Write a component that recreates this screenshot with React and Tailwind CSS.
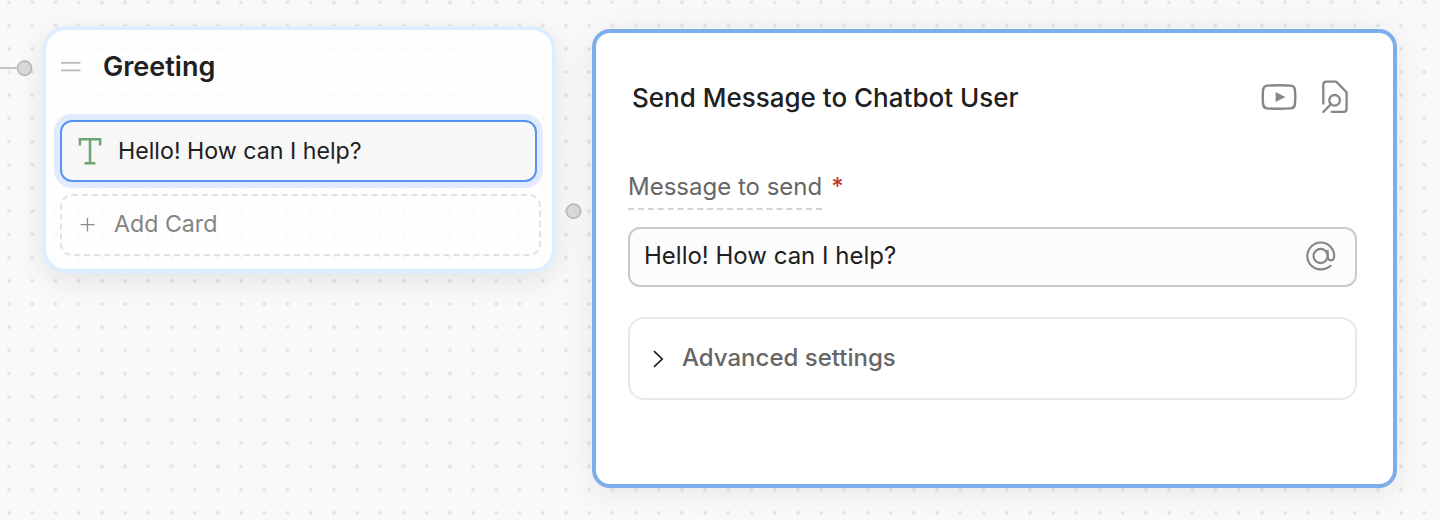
function DotGrid() {
  return (
    <svg className="absolute inset-0 h-full w-full" aria-hidden="true">
      <defs>
        <pattern id="dots" x="-2.45" y="-9.2" width="23.2" height="23.2" patternUnits="userSpaceOnUse">
          <circle cx="11.6" cy="11.6" r="2" fill="#e5e5e5" />
        </pattern>
      </defs>
      <rect width="100%" height="100%" fill="url(#dots)" />
    </svg>
  );
}

function Handle() {
  return (
    <svg className="block h-4 w-4 shrink-0" viewBox="0 0 16 16" aria-hidden="true">
      <circle cx="7.6" cy="8.2" r="7.1" fill="#d9d9d9" stroke="#b6b6b6" strokeWidth="1.5" />
    </svg>
  );
}

function GripIcon() {
  return (
    <svg className="h-5 w-5" viewBox="0 0 20 20" stroke="#b9b9b9" strokeWidth="1.7" aria-hidden="true">
      <path d="M0 5.8H19.4M0 13.4H19.4" />
    </svg>
  );
}

function TextIcon() {
  return (
    <svg className="h-7 w-6" viewBox="0 0 24 28" fill="none" stroke="#6fa372" strokeWidth="2.5" aria-hidden="true">
      <path d="M1.9 8.6V2.2H22.1V8.6M12 2.2V26.2M6.6 26.2H17.4" />
    </svg>
  );
}

function VideoIcon() {
  return (
    <svg className="h-[26px] w-9" viewBox="0 0 36 26" fill="none" aria-hidden="true">
      <path
        d="M6.2 1.6Q18 .8 29.8 1.6Q33.4 1.9 33.9 5.5Q34.6 13 33.9 20.5Q33.4 24.1 29.8 24.4Q18 25.2 6.2 24.4Q2.6 24.1 2.1 20.5Q1.4 13 2.1 5.5Q2.6 1.9 6.2 1.6Z"
        stroke="#868686"
        strokeWidth="2.4"
      />
      <path d="M14.6 8L24.4 13L14.6 18Z" fill="#868686" />
    </svg>
  );
}

function FileSearchIcon() {
  return (
    <svg className="h-[34px] w-7" viewBox="0 0 28 34" fill="none" stroke="#868686" strokeWidth="2.3" strokeLinecap="round" strokeLinejoin="round" aria-hidden="true">
      <path d="M2.3 23.7V4.6Q2.3 1.6 5.3 1.6H15.2L25.6 12.3V28.7Q25.6 31.8 22.6 31.8H10.7" />
      <circle cx="13.6" cy="20.3" r="5.3" />
      <path d="M9.8 24.2L2.3 32" />
    </svg>
  );
}

function AtIcon() {
  return (
    <svg className="h-[30px] w-[30px]" viewBox="0 0 30 30" fill="none" stroke="#858585" strokeWidth="2.1" strokeLinecap="round" aria-hidden="true">
      <circle cx="14.6" cy="15" r="7.1" />
      <path d="M21.7 9.8V15.8Q21.8 19.4 24.9 19.4Q28.2 19.3 28.2 15C28.2 7.4 22.2 1.5 14.8 1.5S1.3 7.5 1.3 15S7.3 28.4 14.7 28.4Q20.4 28.4 24.4 24.8" />
    </svg>
  );
}

function GreetingNode() {
  return (
    <section className="flex h-[247px] w-[514px] shrink-0 flex-col rounded-[24px] border-4 border-[#dceeff] bg-white/75 shadow-[0_8px_28px_rgba(0,0,0,0.09)]">
      <header className="flex h-[74px] items-center pl-[15px]">
        <GripIcon />
        <h2 className="ml-[22px] text-[27px] font-semibold leading-8 text-[#202020]">Greeting</h2>
      </header>
      <div className="mt-4 ml-[14px] flex h-[62px] w-[477px] items-center rounded-[12px] border-2 border-[#5793f3] bg-[#f4f4f4]/75 pl-[16px] shadow-[0_0_0_6px_#e2ebfd]">
        <TextIcon />
        <span className="ml-[16px] text-[23.2px] text-[#202020]">Hello! How can I help?</span>
      </div>
      <button className="mt-3 ml-[14px] flex h-[62px] w-[481px] items-center rounded-[12px] border-2 border-dashed border-[#e2e2e2] pl-[17px]">
        <svg className="h-4 w-4" viewBox="0 0 16 16" stroke="#8b8b8b" strokeWidth="1.3" aria-hidden="true">
          <path d="M1.6 7.6H15.4M8.5 .8V14.6" />
        </svg>
        <span className="ml-[19px] -mt-[2px] text-[23.2px] text-[#838383]">Add Card</span>
      </button>
    </section>
  );
}

function MessagePanel() {
  return (
    <section className="flex h-[459px] w-[805px] shrink-0 flex-col rounded-[18px] border-4 border-[#7daeec] bg-white px-8 shadow-[0_4px_32px_rgba(0,0,0,0.08)]">
      <header className="mt-[46px] flex h-9 items-center pl-1">
        <h1 className="grow text-[26px] font-medium text-[#202020]">Send Message to Chatbot User</h1>
        <div className="mr-3 flex items-center gap-6">
          <VideoIcon />
          <FileSearchIcon />
        </div>
      </header>
      <div className="mt-[51px] flex h-[44px] items-start gap-[9px] text-[24px]">
        <label className="h-[44px] border-b-2 border-dashed border-[#d4d4d4] leading-[42px] text-[#666666]">Message to send</label>
        <span className="font-medium leading-[42px] text-[#c0392f]">*</span>
      </div>
      <div className="mt-[17px] flex h-[60px] w-[729px] items-center rounded-[12px] border-2 border-[#cacaca] bg-[#fcfcfc] pr-[19px] pb-[2px] pl-[14px]">
        <span className="grow text-[24px] text-[#202020]">Hello! How can I help?</span>
        <AtIcon />
      </div>
      <div className="mt-[30px] flex h-[83px] w-[729px] items-center rounded-[16px] border-2 border-[#e8e8e8] pb-[2px] pl-[22px]">
        <svg className="mt-[2px] h-[18px] w-3" viewBox="0 0 12 18" fill="none" stroke="#202020" strokeWidth="1.7" aria-hidden="true">
          <path d="M2 1.2L10.2 9L2 16.8" />
        </svg>
        <span className="ml-[18px] text-[24px] font-medium text-[#666666]">Advanced settings</span>
      </div>
    </section>
  );
}

export default function App() {
  return (
    <main className="relative h-[520px] w-[1440px] overflow-hidden bg-[#f9f9f9] font-[Inter,sans-serif]">
      <DotGrid />
      <div className="relative flex items-start">
        <div className="flex items-center pt-[60px]">
          <div className="h-[2px] w-[17px] bg-[#c2c2c2]" />
          <Handle />
        </div>
        <div className="pt-[26px] pl-[9px]">
          <GreetingNode />
        </div>
        <div className="pt-[203px] pl-[10px]">
          <Handle />
        </div>
        <div className="pt-[29px] pl-[10px]">
          <MessagePanel />
        </div>
      </div>
    </main>
  );
}
